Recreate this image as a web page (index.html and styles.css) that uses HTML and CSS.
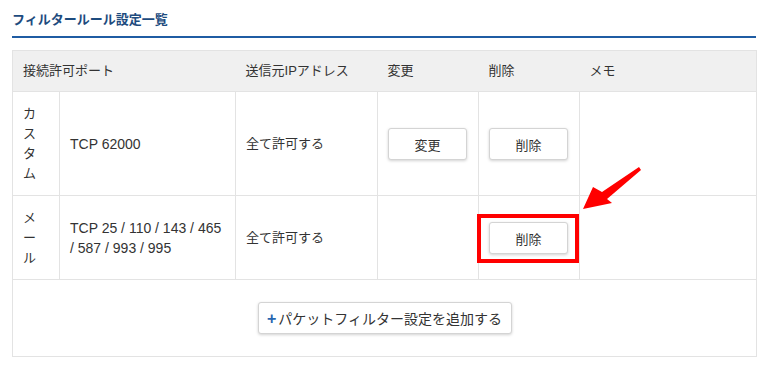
FILE: index.html
```html
<!DOCTYPE html>
<html lang="ja">
<head>
    <meta charset="UTF-8">
    <meta name="viewport" content="width=device-width, initial-scale=1.0">
    <title>フィルタールール設定一覧</title>
    <link rel="stylesheet" href="styles.css">
</head>
<body>
    <div class="page">
        <h2 class="title">フィルタールール設定一覧</h2>
        <table class="rules">
            <colgroup>
                <col class="c-type">
                <col class="c-port">
                <col class="c-src">
                <col class="c-edit">
                <col class="c-del">
                <col class="c-memo">
            </colgroup>
            <thead>
                <tr>
                    <th colspan="2">接続許可ポート</th>
                    <th>送信元IPアドレス</th>
                    <th>変更</th>
                    <th>削除</th>
                    <th>メモ</th>
                </tr>
            </thead>
            <tbody>
                <tr>
                    <td class="type">カスタム</td>
                    <td class="port">TCP 62000</td>
                    <td>全て許可する</td>
                    <td><button class="button">変更</button></td>
                    <td><button class="button">削除</button></td>
                    <td></td>
                </tr>
                <tr>
                    <td class="type">メール</td>
                    <td class="port">TCP 25 / 110 / 143 / 465<br>/ 587 / 993 / 995</td>
                    <td>全て許可する</td>
                    <td></td>
                    <td>
                        <span class="mark">
                            <button class="button">削除</button>
                            <span class="highlight"></span>
                        </span>
                    </td>
                    <td></td>
                </tr>
                <tr>
                    <td colspan="6" class="add-cell">
                        <button class="button add"><span class="plus">+</span>パケットフィルター設定を追加する</button>
                    </td>
                </tr>
            </tbody>
        </table>

        <!-- annotation arrow -->
        <svg class="arrow" width="80" height="60" viewBox="0 0 80 60">
            <polygon points="13,49 23,27 32,32 69,7 71,10 37,39 42,43" fill="#ff0000"/>
        </svg>
    </div>
</body>
</html>
```

FILE: styles.css
```css
* {
    margin: 0;
    padding: 0;
    box-sizing: border-box;
}

body {
    font-family: "Liberation Sans", "Noto Sans CJK JP", sans-serif;
    font-size: 13px;
    color: #333333;
    background-color: white;
}

.page {
    position: relative;
    padding: 0 13px 0 12px;
}

.title {
    font-size: 13px;
    font-weight: bold;
    line-height: 20px;
    color: #1d4b7e;
    padding: 10px 0 6px;
    border-bottom: 2px solid #1f5ca3;
}

.rules {
    width: 744px;
    margin-top: 12px;
    border-collapse: collapse;
    table-layout: fixed;
    border: 1px solid #e3e3e3;
}

.c-type { width: 47px; }
.c-port { width: 176px; }
.c-src { width: 142px; }
.c-edit { width: 101px; }
.c-del { width: 101px; }
.c-memo { width: 177px; }

.rules th {
    background-color: #f0f0f0;
    font-weight: normal;
    text-align: left;
    line-height: 20px;
    padding: 10px 10px 10px;
    border-bottom: 1px solid #e3e3e3;
}

.rules td {
    line-height: 20px;
    padding: 12px 10px 11px;
    vertical-align: middle;
    border: 1px solid #e3e3e3;
}

.rules td.type {
    padding-right: 12px;
    word-break: break-all;
    line-break: anywhere;
}

.rules td.port {
    font-size: 14px;
}

.button {
    font-family: inherit;
    font-size: 13px;
    color: #333333;
    width: 79px;
    height: 32px;
    background-color: white;
    border: 1px solid #d4d4d4;
    border-radius: 3px;
    box-shadow: 0 1px 3px rgba(0, 0, 0, 0.18);
    cursor: pointer;
}

.mark {
    position: relative;
    display: inline-block;
    vertical-align: middle;
}

.mark .button {
    display: block;
}

.highlight {
    position: absolute;
    top: -8px;
    bottom: -9px;
    left: -12px;
    right: -11px;
    border: 4px solid #ff0000;
}

.rules td.add-cell {
    text-align: center;
    padding: 22px 0 22px;
}

.add {
    width: 254px;
    font-size: 14px;
}

.plus {
    color: #2866b0;
    font-weight: bold;
    font-size: 16px;
    margin-right: 2px;
}

.arrow {
    position: absolute;
    left: 570px;
    top: 160px;
}
```
